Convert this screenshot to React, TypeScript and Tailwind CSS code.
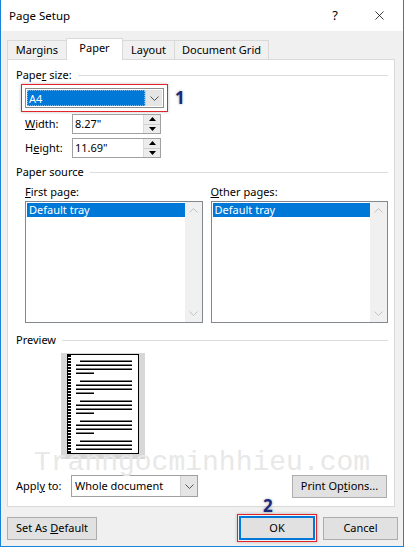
import { X } from 'lucide-react';

const FONT = "font-['Noto_Sans','Segoe_UI',sans-serif]";

function Chevron({ className = '' }: { className?: string }) {
  return (
    <svg width="9" height="5" viewBox="0 0 9 5" className={className}>
      <path d="M0.5 0.5L4.5 4.5L8.5 0.5" fill="none" stroke="currentColor" strokeWidth="1" />
    </svg>
  );
}

function SectionHeading({ children, className = '' }: { children: React.ReactNode; className?: string }) {
  return (
    <div className={`flex items-center gap-[6px] h-4 ${className}`}>
      <span className="leading-4">{children}</span>
      <div className="flex-1 h-px bg-[#dcdcdc]" />
    </div>
  );
}

function Spinner() {
  return (
    <div className="w-[17px] h-full flex flex-col border-l border-[#dadada] bg-[#ececec]">
      <div className="flex-1 flex items-center justify-center border-b border-[#d0d0d0]">
        <svg width="7" height="4" viewBox="0 0 7 4">
          <path d="M0 4L3.5 0L7 4Z" fill="#000" />
        </svg>
      </div>
      <div className="flex-1 flex items-center justify-center">
        <svg width="7" height="4" viewBox="0 0 7 4">
          <path d="M0 0L3.5 4L7 0Z" fill="#000" />
        </svg>
      </div>
    </div>
  );
}

function ListBox({ accessKey, rest }: { accessKey: string; rest: string }) {
  return (
    <div className="flex flex-col w-[178px]">
      <div className="h-4 leading-4 mb-px">
        <u>{accessKey}</u>
        {rest}
      </div>
      <div className="h-[122px] border border-[#828790] bg-white flex">
        <div className="flex-1 pt-px pl-px">
          <div className="h-[14px] bg-[#0078d7] text-white leading-[14px] pl-[2px]">Default tray</div>
        </div>
        <div className="w-[17px] bg-[#f0f0f0] flex flex-col items-center justify-between py-[6px] text-[#c2c2c2]">
          <Chevron className="rotate-180" />
          <Chevron />
        </div>
      </div>
    </div>
  );
}

function PagePreview() {
  const groups = [7, 27, 47, 67, 87];
  const lines: { x: number; y: number; w: number }[] = [];
  groups.forEach((g) => {
    lines.push({ x: 13, y: g, w: 52 });
    lines.push({ x: 9, y: g + 4, w: 56 });
    lines.push({ x: 9, y: g + 8, w: 56 });
    lines.push({ x: 9, y: g + 12, w: 18 });
  });
  const dashes: number[] = [];
  for (let y = 1; y < 99; y += 3) dashes.push(y);
  return (
    <div className="w-[84px] h-[106px] bg-[#d7d7d7] pl-[6px] pt-px">
      <svg width="72" height="100" viewBox="0 0 72 100">
        <rect x="0.5" y="0.5" width="71" height="99" fill="#fff" stroke="#000" />
        {dashes.map((y) => (
          <rect key={y} x="1" y={y} width="3" height="2" fill="#000" />
        ))}
        {lines
          .filter((l) => l.y < 98)
          .map((l, i) => (
            <rect key={i} x={l.x} y={l.y - 0.5} width={l.w} height="1.5" fill="#000" />
          ))}
      </svg>
    </div>
  );
}

function Button({ children, className = '' }: { children: React.ReactNode; className?: string }) {
  return (
    <div className={`h-[23px] bg-[#e1e1e1] border border-[#adadad] flex items-center justify-center ${className}`}>
      {children}
    </div>
  );
}

export default function App() {
  return (
    <div className={`${FONT} text-[11px] text-black w-[404px] h-[547px] bg-[#f0f0f0] border-x border-b border-[#1883d7] flex flex-col relative overflow-hidden`}>
      {/* Title bar */}
      <div className="h-[31px] bg-white flex items-center pl-[8px] text-[11.5px]">
        <span>Page Setup</span>
        <span className="ml-auto mr-[34px] text-[13px]">?</span>
        <X size={15} strokeWidth={1.2} className="mr-[16px]" />
      </div>

      {/* Tabs */}
      <div className="mt-[7px] pl-[6px] flex items-end h-[21px]">
        <div className="w-[60px] h-[19px] border border-b-0 border-[#d9d9d9] flex items-center justify-center">Margins</div>
        <div className="w-[57px] h-[22px] -ml-px -mb-px relative z-10 bg-white border border-b-0 border-[#d9d9d9] flex items-center justify-center pb-[2px]">Paper</div>
        <div className="w-[53px] h-[19px] -ml-px border border-b-0 border-[#d9d9d9] flex items-center justify-center">Layout</div>
        <div className="w-[95px] h-[19px] -ml-px border border-b-0 border-[#d9d9d9] flex items-center justify-center">Document Grid</div>
      </div>

      {/* Panel */}
      <div className="ml-[6px] w-[388px] h-[448px] bg-white border border-[#d9d9d9] pl-[8px] pr-[6px] pt-[7px] flex flex-col">
        <SectionHeading>
          Pape<u>r</u> size:
        </SectionHeading>

        <div className="mt-px flex items-center">
          <div className="ml-[5px] w-[147px] h-[28px] border border-[#e0262c] p-[3px] shadow-[0_0_3px_rgba(0,0,0,0.25)]">
            <div className="h-full border border-[#8c8c8c] flex p-px">
              <div className="flex-1 bg-[#0078d7] text-white leading-[18px] pl-[2px] outline-1 outline-dotted outline-[#7fbbee] -outline-offset-1">A4</div>
              <div className="w-[17px] bg-[#e5e5e5] border-l border-[#cfcfcf] flex items-center justify-center text-[#555]">
                <Chevron />
              </div>
            </div>
          </div>
          <span className="ml-[7px] text-[17px] font-bold text-[#1a2a7c] [text-shadow:0_0_3px_rgba(0,0,0,0.35)]">1</span>
        </div>

        <div className="mt-[2px] ml-[9px] flex items-center h-[20px]">
          <span className="w-[47px]">
            <u>W</u>idth:
          </span>
          <div className="w-[89px] h-full border border-[#a0a0a0] flex">
            <span className="flex-1 pl-[2px] leading-[18px]">8.27"</span>
            <Spinner />
          </div>
        </div>
        <div className="mt-[4px] ml-[9px] flex items-center h-[20px]">
          <span className="w-[47px]">
            H<u>e</u>ight:
          </span>
          <div className="w-[89px] h-full border border-[#a0a0a0] flex">
            <span className="flex-1 pl-[2px] leading-[18px]">11.69"</span>
            <Spinner />
          </div>
        </div>

        <SectionHeading className="mt-[6px]">Paper source</SectionHeading>

        <div className="mt-[4px] ml-[9px] flex gap-[8px]">
          <ListBox accessKey="F" rest="irst page:" />
          <ListBox accessKey="O" rest="ther pages:" />
        </div>

        <SectionHeading className="mt-[9px]">Preview</SectionHeading>

        <div className="mt-[5px] ml-[45px]">
          <PagePreview />
        </div>

        <div className="mt-[16px] flex items-center h-[22px]">
          <span className="w-[55px]">
            Appl<u>y</u> to:
          </span>
          <div className="w-[127px] h-full border border-[#a0a0a0] flex">
            <span className="flex-1 pl-[3px] leading-[20px]">Whole document</span>
            <div className="w-[17px] bg-[#e5e5e5] border-l border-[#cfcfcf] flex items-center justify-center text-[#555]">
              <Chevron />
            </div>
          </div>
          <Button className="ml-auto mr-[1px] w-[95px] h-[22px]">
            Print Op<u>t</u>ions...
          </Button>
        </div>
      </div>

      {/* Bottom buttons */}
      <div className="mt-[7px] flex items-center pl-[6px] pr-[5px]">
        <Button className="w-[90px]">
          Set As&nbsp;<u>D</u>efault
        </Button>
        <div className="ml-auto relative">
          <span className="absolute -top-[21px] left-[26px] text-[17px] font-bold text-[#1a2a7c] [text-shadow:0_0_3px_rgba(0,0,0,0.35)]">2</span>
          <div className="w-[80px] h-[28px] border border-[#e0262c] p-px shadow-[0_0_3px_rgba(0,0,0,0.25)]">
            <div className="h-full bg-[#e1e1e1] border-2 border-[#0078d7] flex items-center justify-center">OK</div>
          </div>
        </div>
        <Button className="ml-[6px] w-[75px]">Cancel</Button>
      </div>

      {/* Watermark */}
      <div className="absolute left-[33px] top-[449px] font-['Liberation_Mono',monospace] text-[28px] leading-none text-[#e8e8e8] pointer-events-none whitespace-nowrap">
        Tranngocminhhieu.com
      </div>
    </div>
  );
}
